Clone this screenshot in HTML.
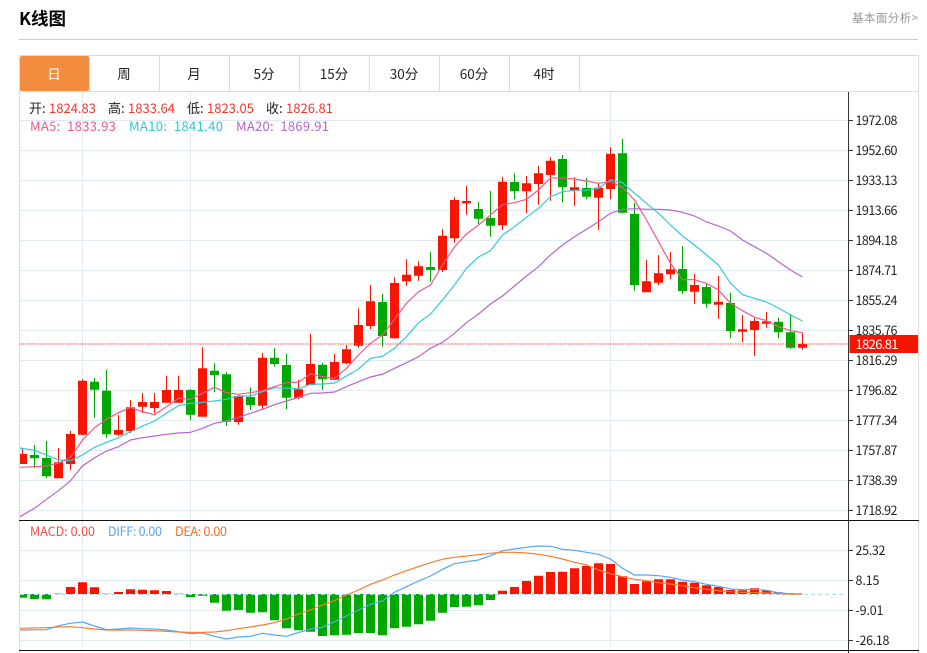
<!DOCTYPE html>
<html lang="zh"><head><meta charset="utf-8"><title>K线图</title>
<style>
html,body{margin:0;padding:0;background:#fff}
body{width:927px;height:653px;overflow:hidden}
svg{display:block;font-family:"Noto Sans CJK SC","Liberation Sans",sans-serif}
text{white-space:pre}
</style></head><body>
<svg width="927" height="653" viewBox="0 0 927 653" xmlns="http://www.w3.org/2000/svg">
<!-- header -->
<text x="19" y="25" font-size="17.5" font-weight="700" fill="#000">K线图</text>
<text x="852" y="22" font-size="11.5" fill="#999" textLength="66">基本面分析&gt;</text>
<path d="M19 39.5H918" stroke="#ccc" fill="none"/>
<!-- frame -->
<path d="M19.5 55V653M918.5 55V653M19 55.5H919M19 91.5H919" stroke="#dcdcdc" fill="none"/>
<path d="M159.5 56V91M229.5 56V91M299.5 56V91M369.5 56V91M439.5 56V91M509.5 56V91M579.5 56V91M89.5 56V91" stroke="#dcdcdc" fill="none"/>
<rect x="20" y="56" width="69" height="35" rx="2" fill="#f48c3f"/>
<g font-size="13.5" fill="#222" text-anchor="middle">
<text x="54" y="79" fill="#fff">日</text><text x="124" y="79">周</text><text x="194" y="79">月</text><text x="264" y="79">5分</text><text x="334" y="79">15分</text><text x="404" y="79">30分</text><text x="474" y="79">60分</text><text x="544" y="79">4时</text>
</g>
<!-- grid -->
<path d="M20 120.5H848M20 150.5H848M20 180.5H848M20 210.5H848M20 240.5H848M20 270.5H848M20 300.5H848M20 330.5H848M20 360.5H848M20 390.5H848M20 420.5H848M20 450.5H848M20 480.5H848M20 510.5H848M20 550.5H848M20 580.5H848M20 610.5H848M20 640.5H848M82.5 92V650M190.5 92V650M610.5 92V650" stroke="#e0eaf2" fill="none"/>
<!-- info -->
<g font-size="13">
<text x="29" y="113" fill="#222">开:</text><text x="49" y="113" fill="#f5352b" textLength="47">1824.83</text>
<text x="108" y="113" fill="#222">高:</text><text x="128" y="113" fill="#f5352b" textLength="47">1833.64</text>
<text x="187" y="113" fill="#222">低:</text><text x="207" y="113" fill="#f5352b" textLength="47">1823.05</text>
<text x="266" y="113" fill="#222">收:</text><text x="286" y="113" fill="#f5352b" textLength="47">1826.81</text>
<text x="30" y="131" fill="#f0588c" textLength="86">MA5:  1833.93</text>
<text x="129" y="131" fill="#2fc8dc" textLength="94">MA10:  1841.40</text>
<text x="236" y="131" fill="#b666cc" textLength="93">MA20:  1869.91</text>
</g>
<g font-size="12.5">
<text x="30" y="536" fill="#f54a45" textLength="65">MACD: 0.00</text>
<text x="108" y="536" fill="#55a9f0" textLength="54">DIFF: 0.00</text>
<text x="175" y="536" fill="#f96c1c" textLength="52">DEA: 0.00</text>
</g>
<!-- candles -->
<path fill="#f61500" d="M20 454h7v10h-7zM54 462.3h9v16h-9zM66 434h9v30h-9zM78 380.7h9v54h-9zM114 430h9v4.7h-9zM126 407.3h9v23.7h-9zM138 402h9v4.7h-9zM150 402h9v6h-9zM162 390h9v12.7h-9zM174 390h9v12.7h-9zM198 368.3h9v48.4h-9zM234 396h9v26h-9zM258 357.7h9v48h-9zM294 389.3h9v8.4h-9zM306 364h9v21h-9zM330 362h9v17.7h-9zM342 349.3h9v14h-9zM354 325h9v20.7h-9zM366 301.3h9v24.7h-9zM390 283h9v55.3h-9zM402 274.7h9v6.6h-9zM414 266.3h9v9.4h-9zM438 235.7h9v34.3h-9zM450 200h9v38.3h-9zM462 201h9v2.3h-9zM498 181.7h9v43.6h-9zM522 183.3h9v8h-9zM534 173.3h9v10.7h-9zM546 160.7h9v14.3h-9zM570 187.3h9v2.7h-9zM594 187.7h9v10h-9zM606 153.7h9v35.3h-9zM642 281.3h9v11h-9zM654 273.3h9v9.4h-9zM666 269.3h9v5h-9zM690 285h9v6.7h-9zM714 301.7h9v3h-9zM738 329.3h9v2.4h-9zM750 321h9v9h-9zM762 321.3h9v2.4h-9zM798 344h9v3.7h-9z"/>
<path fill="none" stroke="#f61500" d="M22.5 448V464M58.5 448V478M70.5 431V470M82.5 379V435M118.5 415V435.7M130.5 400V433M142.5 393V413M154.5 393V413M166.5 375.7V402.7M178.5 375.7V402.7M202.5 347.3V416.7M238.5 395V424.7M262.5 352.7V409M298.5 380V399.3M310.5 334V385M334.5 354V379.7M346.5 345V364.3M358.5 308.3V347.7M370.5 285V329.3M394.5 277.3V338.3M406.5 259.3V286M418.5 261.3V280.7M442.5 229V272M454.5 197.3V242.7M466.5 186V214.7M502.5 176.7V230M526.5 176V213.3M538.5 165.7V204.7M550.5 157.3V200.7M574.5 177.3V205.7M598.5 183.3V229.7M610.5 147.3V199M646.5 260V292.3M658.5 255V285M670.5 252V279M694.5 274V304M718.5 276V318.7M742.5 315V342.3M754.5 318.3V356M766.5 312V327.7M802.5 332.7V349.7"/>
<path fill="#00a800" d="M30 455h9v3.3h-9zM42 458h9v18.3h-9zM90 381.7h9v8h-9zM102 390.7h9v43.6h-9zM186 390h9v24.7h-9zM210 370.7h9v4.3h-9zM222 374.3h9v47.4h-9zM246 397h9v8h-9zM270 357.7h9v6.3h-9zM282 365h9v32.7h-9zM318 364.7h9v14.6h-9zM378 302h9v34h-9zM426 267h9v3h-9zM474 209h9v9.7h-9zM486 218h9v7.7h-9zM510 182h9v9h-9zM558 159h9v28h-9zM582 188h9v8.7h-9zM618 153.3h9v59.4h-9zM630 214h9v71h-9zM678 269h9v22h-9zM702 287h9v16.7h-9zM726 303h9v28h-9zM774 321.7h9v10.6h-9zM786 332.3h9v15.4h-9z"/>
<path fill="none" stroke="#00a800" d="M34.5 445V468M46.5 441V478M94.5 378V417.7M106.5 370V437.7M190.5 389V420M214.5 363.3V392.3M226.5 372.3V425.7M250.5 387.3V410M274.5 348.3V366.7M286.5 354V409M322.5 362.7V390M382.5 294V346.7M430.5 252V281.7M478.5 202V224M490.5 191V236.7M514.5 173.3V199.3M562.5 155V202.3M586.5 178V199.3M622.5 139V213.3M634.5 202.7V290.7M682.5 246.3V294.3M706.5 283.3V307.7M730.5 292.7V338.3M778.5 317.7V338.3M790.5 314V348.7"/>
<!-- MA lines -->
<polyline fill="none" stroke="#b666cc" stroke-width="1.2" points="20,516.7 34.5,508.3 46.5,499.3 58.5,490.7 70.5,480.7 82.5,466 94.5,457.7 106.5,451 118.5,446.7 130.5,440 142.5,437.7 154.5,436 166.5,434.3 178.5,433 190.5,432.3 202.5,428.3 214.5,423.3 226.5,421 238.5,417.3 250.5,413.3 262.5,409.3 274.5,404.7 286.5,401 298.5,397.3 310.5,393.3 322.5,393 334.5,392 346.5,386.7 358.5,381.7 370.5,377 382.5,374.3 394.5,368.3 406.5,362.7 418.5,356.7 430.5,348.3 442.5,342.3 454.5,333.3 466.5,322.7 478.5,314 490.5,304 502.5,296 514.5,286 526.5,276 538.5,266.7 550.5,255 562.5,245 574.5,236.7 586.5,229.3 598.5,221.7 610.5,213.3 622.5,209.3 634.5,208.7 646.5,209.3 658.5,209.3 670.5,210 682.5,212.3 694.5,216 706.5,222 718.5,226 730.5,231 742.5,240 754.5,246.7 766.5,253.3 778.5,261.7 790.5,270 802.5,277"/>
<polyline fill="none" stroke="#33c9de" stroke-width="1.2" points="20,448 34.5,450.3 46.5,455 58.5,460 70.5,460.7 82.5,455 94.5,447.3 106.5,442.3 118.5,437.7 130.5,431.7 142.5,426 154.5,421 166.5,413.3 178.5,405.7 190.5,403.3 202.5,402.3 214.5,401 226.5,399.3 238.5,396 250.5,396 262.5,391.7 274.5,387.7 286.5,388.3 298.5,388.7 310.5,384.3 322.5,384 334.5,383 346.5,376 358.5,369 370.5,358.3 382.5,356.3 394.5,348.3 406.5,336.7 418.5,322.7 430.5,314 442.5,300 454.5,285 466.5,268.3 478.5,257 490.5,250.7 502.5,235 514.5,226.7 526.5,217.3 538.5,208.3 550.5,196.7 562.5,191.7 574.5,190.3 586.5,190.3 598.5,188.3 610.5,180 622.5,182.7 634.5,193.3 646.5,203.3 658.5,213.3 670.5,225 682.5,236 694.5,245 706.5,255 718.5,265 730.5,283.3 742.5,294.7 754.5,298.3 766.5,302 778.5,308 790.5,315 802.5,321"/>
<polyline fill="none" stroke="#f0588c" stroke-width="1.2" points="20,467.3 34.5,466.7 46.5,466 58.5,463.3 70.5,457.3 82.5,440 94.5,427.7 106.5,419.3 118.5,412.7 130.5,407.3 142.5,411.7 154.5,414.7 166.5,406.7 178.5,398.3 190.5,399.3 202.5,393.3 214.5,387.3 226.5,392.7 238.5,394.3 250.5,392.7 262.5,390.7 274.5,386.7 286.5,382.7 298.5,382 310.5,374 322.5,376.7 334.5,378.3 346.5,368.3 358.5,355 370.5,343.3 382.5,335 394.5,319.3 406.5,303.3 418.5,291.7 430.5,285 442.5,265 454.5,247 466.5,234 478.5,225 490.5,215 502.5,204.7 514.5,202.7 526.5,199.3 538.5,190 550.5,177.7 562.5,178.3 574.5,179 586.5,181 598.5,183.3 610.5,181.7 622.5,187.3 634.5,200 646.5,220 658.5,241.7 670.5,263.3 682.5,279.7 694.5,279.7 706.5,283.3 718.5,290 730.5,303.3 742.5,310.7 754.5,317.3 766.5,320.7 778.5,326.7 790.5,330.7 802.5,332.7"/>
<path d="M20 344H848" stroke="#f54a45" stroke-dasharray="1.5 1" fill="none"/>
<!-- MACD -->
<path fill="#f61500" d="M66 587h9v7h-9zM78 582.3h9v11.7h-9zM90 587.3h9v6.7h-9zM114 592h9v2h-9zM126 589.3h9v4.7h-9zM138 589.7h9v4.3h-9zM150 590.3h9v3.7h-9zM162 591h9v3h-9z"/>
<path fill="#f61500" opacity=".35" d="M54 593h9v1h-9zM102 593.3h9v.7h-9zM174 593.3h9v.7h-9z"/>
<path fill="#00a800" d="M20 594h7v3.7h-7zM30 594h9v5h-9zM42 594h9v5.3h-9zM186 594h9v3h-9zM198 594h9v1.7h-9zM210 594h9v8.7h-9zM222 594h9v16.7h-9zM234 594h9v16h-9zM246 594h9v18.7h-9zM258 594h9v18.3h-9zM270 594h9v26.3h-9zM282 594h9v34.3h-9zM294 594h9v36.3h-9zM306 594h9v37.7h-9zM318 594h9v42h-9zM330 594h9v41.3h-9zM342 594h9v40.7h-9zM354 594h9v39h-9zM366 594h9v39h-9zM378 594h9v41.3h-9zM390 594h9v34.3h-9zM402 594h9v32.7h-9zM414 594h9v30.3h-9zM426 594h9v26.7h-9zM438 594h9v18.7h-9zM450 594h9v13h-9zM462 594h9v12.7h-9zM474 594h9v11.3h-9zM486 594h9v6h-9z"/>
<path fill="#f61500" d="M498 590.7h9v3.3h-9zM510 587h9v7h-9zM522 581h9v13h-9zM534 575.7h9v18.3h-9zM546 572h9v22h-9zM558 571.7h9v22.3h-9zM570 568.3h9v25.7h-9zM582 566h9v28h-9zM594 563.3h9v30.7h-9zM606 564h9v30h-9zM618 576.3h9v17.7h-9zM630 584h9v10h-9zM642 581.3h9v12.7h-9zM654 579.3h9v14.7h-9zM666 579.3h9v14.7h-9zM678 581.7h9v12.3h-9zM690 582.7h9v11.3h-9zM702 585.3h9v8.7h-9zM714 587h9v7h-9zM726 590h9v4h-9zM738 590.3h9v3.7h-9zM750 588.3h9v5.7h-9zM762 590.3h9v3.7h-9zM774 592.3h9v1.7h-9zM786 593.3h9v.7h-9z"/>
<path d="M20 594.5H846" stroke="#a8dcf2" stroke-dasharray="4 3" fill="none"/>
<polyline fill="none" stroke="#55a9f0" stroke-width="1.2" points="20,630 46.5,629.7 58.5,625.7 70.5,623.3 82.5,622 94.5,626 106.5,629.7 118.5,629 130.5,628 142.5,628.7 154.5,629 166.5,630 178.5,631.7 190.5,633.7 202.5,633 214.5,636.3 226.5,639 238.5,637 250.5,636.3 262.5,633.3 274.5,635 286.5,636.3 298.5,632.5 310.5,629 322.5,627.3 334.5,621.7 346.5,616 358.5,610 370.5,604.3 382.5,601 394.5,592.3 406.5,586.7 418.5,581 430.5,576 442.5,569.3 454.5,563.7 466.5,561.7 478.5,560 490.5,555.7 502.5,550.7 514.5,549 526.5,547.3 538.5,546 550.5,546.3 562.5,549.3 574.5,550.3 586.5,552.3 598.5,554.3 610.5,559 622.5,568.3 634.5,575 646.5,575 658.5,575.7 670.5,577.3 682.5,580 694.5,581.7 706.5,584.3 718.5,586.3 730.5,589 742.5,589.7 754.5,589.3 766.5,590.3 778.5,592.7 790.5,594 802.5,594"/>
<polyline fill="none" stroke="#f97b2a" stroke-width="1.2" points="20,628.3 46.5,627.7 58.5,627 70.5,626.7 82.5,627.7 94.5,629 106.5,630 118.5,630 130.5,630 142.5,630.3 154.5,630.7 166.5,631.3 178.5,632 190.5,632.3 202.5,632.3 214.5,632 226.5,630.7 238.5,628.7 250.5,627 262.5,625 274.5,622.7 286.5,619 298.5,614 310.5,610 322.5,605 334.5,600.7 346.5,595 358.5,590 370.5,584.3 382.5,580 394.5,575 406.5,570.7 418.5,566.7 430.5,562.7 442.5,559.3 454.5,557.3 466.5,556 478.5,554.7 490.5,553.3 502.5,552.3 514.5,552.3 526.5,553 538.5,554.3 550.5,556.3 562.5,559 574.5,562.3 586.5,565 598.5,570 610.5,573.7 622.5,576.7 634.5,579.3 646.5,580.7 658.5,582.7 670.5,584 682.5,585.7 694.5,587.7 706.5,589.3 718.5,590.7 730.5,591.7 742.5,592.3 754.5,592.7 766.5,593 778.5,593.7 790.5,594 802.5,594"/>
<!-- axes -->
<path d="M19 520.5H919M19 650.5H919" stroke="#111" fill="none"/>
<path d="M848.5 92V653" stroke="#333" fill="none"/>
<path d="M849 120.5h4M849 150.5h4M849 180.5h4M849 210.5h4M849 240.5h4M849 270.5h4M849 300.5h4M849 330.5h4M849 360.5h4M849 390.5h4M849 420.5h4M849 450.5h4M849 480.5h4M849 510.5h4M849 550.5h4M849 580.5h4M849 610.5h4M849 640.5h4" stroke="#333" fill="none"/>
<g font-size="12.5" fill="#222">
<text x="855.5" y="125" textLength="42">1972.08</text><text x="855.5" y="155" textLength="42">1952.60</text><text x="855.5" y="185" textLength="42">1933.13</text><text x="855.5" y="215" textLength="42">1913.66</text><text x="855.5" y="245" textLength="42">1894.18</text><text x="855.5" y="275" textLength="42">1874.71</text><text x="855.5" y="305" textLength="42">1855.24</text><text x="855.5" y="335" textLength="42">1835.76</text><text x="855.5" y="365" textLength="42">1816.29</text><text x="855.5" y="395" textLength="42">1796.82</text><text x="855.5" y="425" textLength="42">1777.34</text><text x="855.5" y="455" textLength="42">1757.87</text><text x="855.5" y="485" textLength="42">1738.39</text><text x="855.5" y="515" textLength="42">1718.92</text>
<text x="855.5" y="555" textLength="30">25.32</text><text x="855.5" y="585" textLength="24">8.15</text><text x="855.5" y="615" textLength="28">-9.01</text><text x="855.5" y="645" textLength="34">-26.18</text>
</g>
<rect x="849.5" y="335" width="68.5" height="18" fill="#f61500"/>
<text x="855.5" y="349" font-size="13" fill="#fff" textLength="43">1826.81</text>
</svg>
</body></html>
